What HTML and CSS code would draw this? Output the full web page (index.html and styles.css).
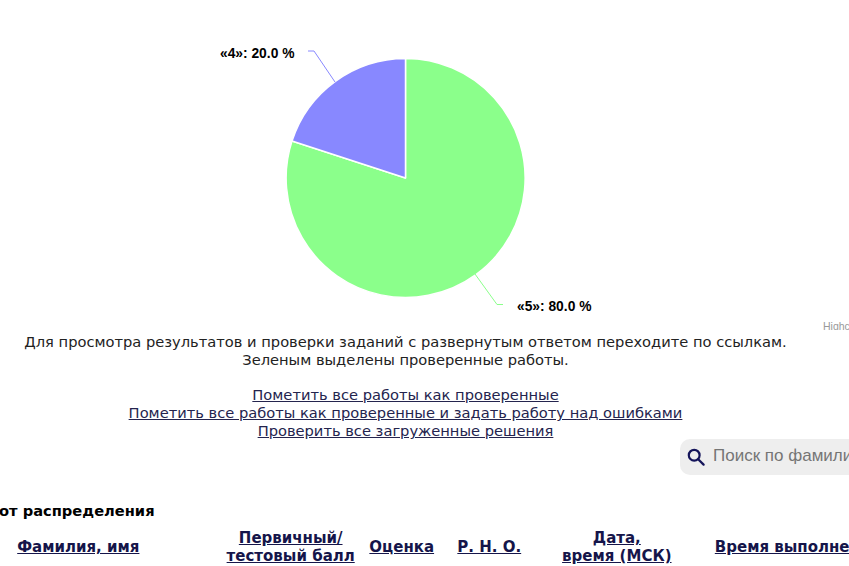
FILE: index.html
```html
<!DOCTYPE html>
<html lang="ru">
<head>
<meta charset="utf-8">
<title>Статистика</title>
<link rel="stylesheet" href="styles.css">
</head>
<body>
<div class="page">
  <svg class="chart" width="849" height="330" viewBox="0 0 849 330">
    <path class="pie-green" d="M405.5 178 L292 141 A119.5 119.5 0 1 0 405.5 58.5 Z"/>
    <path class="pie-blue" d="M405.5 178 L405.5 58.5 A119.5 119.5 0 0 0 292 141 Z"/>
    <path class="line-blue" d="M308 51 H314 L335 82"/>
    <path class="line-green" d="M475 274 L497 304.5 H503"/>
    <text class="pie-label" x="220" y="58">«4»: 20.0 %</text>
    <text class="pie-label" x="517" y="311">«5»: 80.0 %</text>
    <text class="credit" x="823" y="330">Highcharts.com</text>
  </svg>
  <div class="notes">
    <p class="intro">Для просмотра результатов и проверки заданий с развернутым ответом переходите по ссылкам.<br>Зеленым выделены проверенные работы.</p>
    <p class="actions">
      <a href="#">Пометить все работы как проверенные</a><br>
      <a href="#">Пометить все работы как проверенные и задать работу над ошибками</a><br>
      <a href="#">Проверить все загруженные решения</a>
    </p>
  </div>
  <div class="search-row">
    <div class="search">
      <svg class="search-icon" width="18" height="18" viewBox="0 0 18 18"><circle cx="7.2" cy="7.2" r="5.4"/><path d="M11.2 11.2 L16.6 16.6"/></svg>
      <span class="placeholder">Поиск по фамилии</span>
    </div>
  </div>
  <div class="sort-title">от распределения</div>
  <table class="results">
    <colgroup>
      <col class="c-name"><col class="c-score"><col class="c-grade"><col class="c-rno"><col class="c-date"><col class="c-time">
    </colgroup>
    <thead>
      <tr>
        <th><a href="#">Фамилия, имя</a></th>
        <th><a href="#">Первичный/<br>тестовый балл</a></th>
        <th><a href="#">Оценка</a></th>
        <th><a href="#">Р. Н. О.</a></th>
        <th><a href="#">Дата,<br>время (МСК)</a></th>
        <th><a href="#">Время выполнения</a></th>
      </tr>
    </thead>
  </table>
</div>
</body>
</html>
```

FILE: styles.css
```css
html, body {
  margin: 0;
  padding: 0;
  background: #fff;
}

.page {
  width: 849px;
  height: 566px;
  overflow: hidden;
  display: flex;
  flex-direction: column;
  font-family: "DejaVu Sans", Verdana, sans-serif;
  font-size: 14.67px;
  color: #222;
}

.chart {
  display: block;
  flex: none;
}

.pie-green {
  fill: #8bff8b;
  stroke: #fff;
  stroke-width: 1.5;
  stroke-linejoin: round;
}

.pie-blue {
  fill: #8888ff;
  stroke: #fff;
  stroke-width: 1.5;
  stroke-linejoin: round;
}

.line-blue,
.line-green {
  fill: none;
  stroke-width: 1;
}

.line-blue { stroke: #8888ff; }
.line-green { stroke: #8bff8b; }

.pie-label {
  font-family: "Liberation Sans", Arial, sans-serif;
  font-size: 13.8px;
  font-weight: 700;
  fill: #000;
}

.credit {
  font-family: "Liberation Sans", Arial, sans-serif;
  font-size: 10.5px;
  fill: #999;
}

.notes {
  width: 811px;
  margin-top: 3px;
  text-align: center;
  line-height: 18px;
  flex: none;
}

.intro {
  margin: 0 0 17px;
}

.actions {
  margin: 0;
}

.actions a {
  color: #24244e;
  text-decoration: underline;
}

.search-row {
  display: flex;
  margin-top: -1px;
  padding-left: 680px;
  flex: none;
}

.search {
  flex: none;
  width: 220px;
  height: 36px;
  box-sizing: border-box;
  padding-left: 7px;
  display: flex;
  align-items: center;
  gap: 8px;
  background: #eeeeee;
  border-radius: 10px;
}

.search-icon {
  flex: none;
}

.search-icon circle,
.search-icon path {
  fill: none;
  stroke: #14145a;
  stroke-width: 2.2;
  stroke-linecap: round;
}

.placeholder {
  font-family: "Liberation Sans", Arial, sans-serif;
  font-size: 17px;
  line-height: 34px;
  margin-bottom: 2px;
  color: #757575;
  white-space: nowrap;
}

.sort-title {
  flex: none;
  margin-top: 27px;
  margin-left: -1px;
  font-weight: 700;
  color: #000;
  line-height: 18px;
}

.results {
  flex: none;
  margin-top: 9px;
  margin-left: -60px;
  width: 961px;
  table-layout: fixed;
  border-collapse: collapse;
}

.c-name { width: 276.5px; }
.c-score { width: 148px; }
.c-grade { width: 74px; }
.c-rno { width: 101px; }
.c-date { width: 154px; }
.c-time { width: 207px; }

.results th {
  padding: 0;
  font-size: 15px;
  line-height: 18px;
  font-weight: 700;
  text-align: center;
  vertical-align: middle;
  white-space: nowrap;
}

.results a {
  color: #15154a;
  text-decoration: underline;
}
```
